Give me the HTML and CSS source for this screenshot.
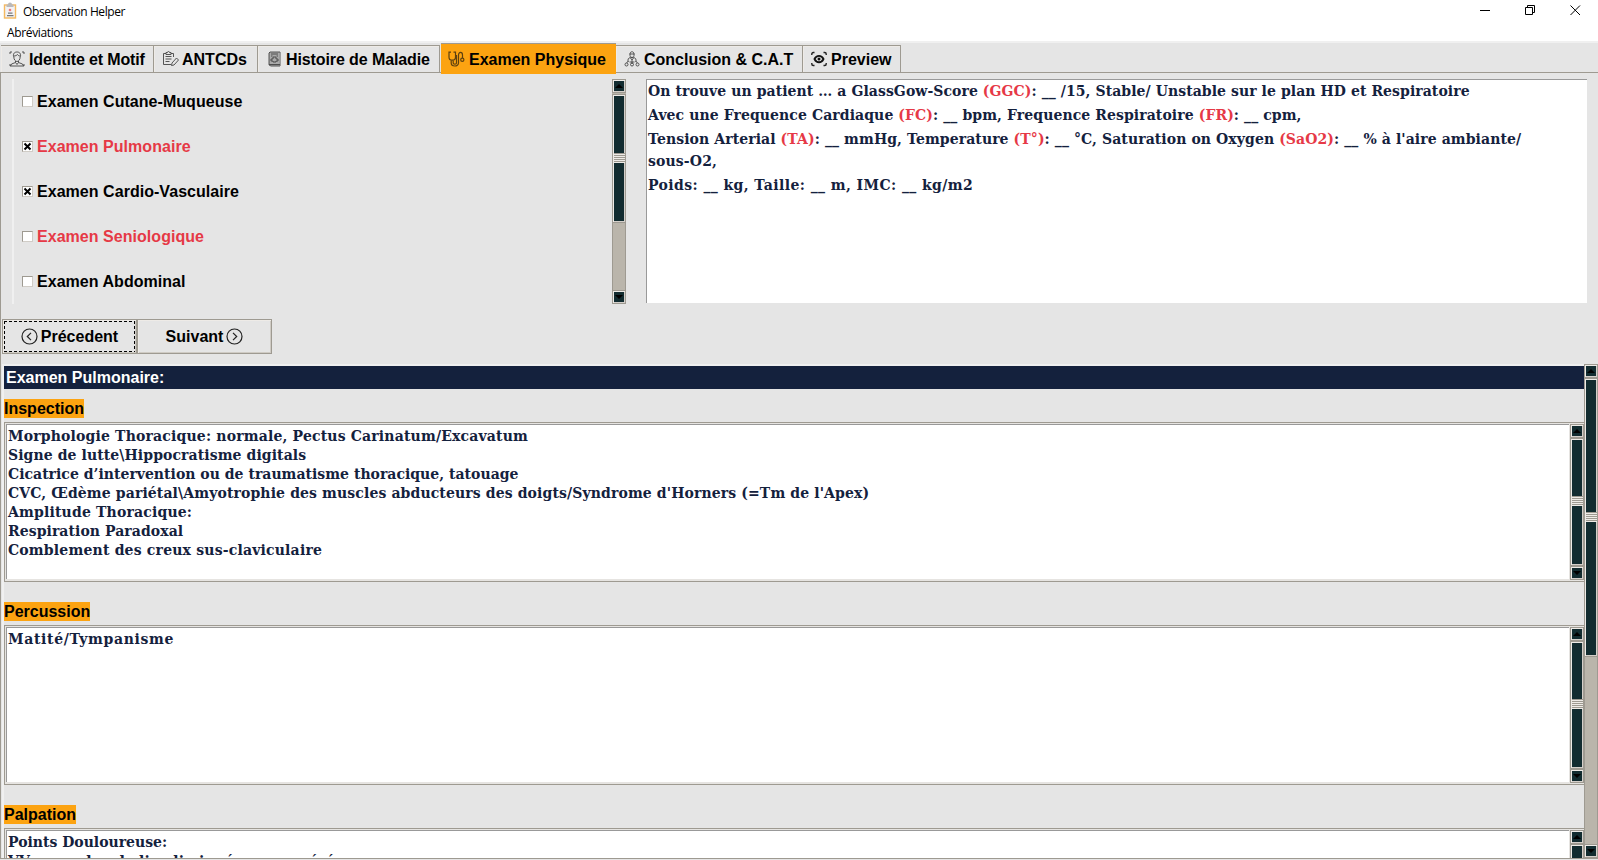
FILE: index.html
```html
<!DOCTYPE html>
<html lang="fr">
<head>
<meta charset="utf-8">
<title>Observation Helper</title>
<link rel="stylesheet" href="styles.css">
</head>
<body>
<header class="titlebar">
  <svg class="app-icon" width="14" height="18" viewBox="0 0 14 18"><rect x="1.500" y="3" width="11" height="13" fill="#f2f2f4" stroke="#f5b95f" stroke-width="1.400"/><path d="M3.500 5V2.500H5a2 2 0 0 1 4 0h1.500V5z" fill="#b9b9bb"/><circle cx="7" cy="8" r="1.300" fill="#f0777a"/><path d="M5 11.200h4.500M4 13.700h6.500" stroke="#777" stroke-width="1.200"/></svg>
  <span class="title">Observation Helper</span>
  <div class="controls">
    <svg width="11" height="11" viewBox="0 0 11 11"><path d="M0 5.500h10" stroke="#000"/></svg>
    <svg width="11" height="11" viewBox="0 0 11 11"><path d="M.5 2.500h7v7h-7zM2.500 2.500v-2h7v7h-2" fill="none" stroke="#000"/></svg>
    <svg width="11" height="11" viewBox="0 0 11 11"><path d="M.5.5l9.500 9.500M10 .5L.5 10" stroke="#000"/></svg>
  </div>
</header>
<nav class="menubar"><span>Abréviations</span></nav>
<div class="tabs">
  <div class="tab t1"><svg width="16" height="16" viewBox="0 0 16 16"><path d="M1 3V1h2M13 1h2v2M1 13v2h14v-2M4.500 5.500C4 2 6 1 8 1s4 1 3.500 4.500M4.500 5c2 0 3-.5 4-1.500.5 1 1.500 1.500 3 1.500M4.800 5.500c0 3 1.500 5 3.200 5s3.200-2 3.200-5M6.500 10v1.500L2.500 13 1.500 15M9.500 10v1.500l4 1.500 1 2M6.500 11.500L8 13.500l1.500-2"/></svg><span>Identite et Motif</span></div>
  <div class="tab t2"><svg width="17" height="16" viewBox="0 0 17 16"><path d="M4 2.500H1.500v11H9M9 2.500h2.500V6M4 3.500v-2h1.500a1 1 0 0 1 2 0H9v2zM3.500 5.500h6M3.500 8h6M3.500 10.500h4M9.500 14.500l.5-2.500 4.500-5 2 2-4.500 5z"/></svg><span>ANTCDs</span></div>
  <div class="tab t3"><svg width="13" height="16" viewBox="0 0 13 16"><path class="fill" d="M1 1h10v14H1z"/><path d="M1 13.500V2l1-1h10v14H2.500L1 13.500h11M3 3h7M3 5h1.500M8.500 5H10M5 6h3v2h2v2H8v1H5v-1H3V8h2z"/></svg><span>Histoire de Maladie</span></div>
  <div class="tab active"><svg width="17" height="16" viewBox="0 0 17 16"><path d="M3 1.200H1v5c0 2 1.200 3 3.200 3s3.300-1 3.300-3v-5h-2M3.200 9.200V12c0 4 7.300 4 7.300 0V4c0-3.500 4-3.500 4 0v3M5.200 9.200V12c0 1.500 3.300 1.500 3.300 0V4"/><circle cx="14.300" cy="8.800" r="1.600"/></svg><span>Examen Physique</span></div>
  <div class="tab t5"><svg width="16" height="16" viewBox="0 0 16 16"><path d="M5.500 3h5M6 3c0-3 4-3 4 0v1.500c0 2.500-4 2.500-4 0zM4 11V9c0-2 1.500-2.500 4-2.500s4 .5 4 2.500v2M6.500 7L8 9l1.500-2M8 9v4M5.500 11h5M2.500 12l2-2M13.500 12l-2-2"/><circle cx="2.500" cy="13.500" r="1.500"/><circle cx="8" cy="13.500" r="1.500"/><circle cx="13.500" cy="13.500" r="1.500"/></svg><span>Conclusion &amp; C.A.T</span></div>
  <div class="tab t6"><svg width="16" height="16" viewBox="0 0 16 16"><path class="corner" d="M.8 4V3q0-1.500 1.500-1.500h1.200M12.500 1.500h1.200q1.500 0 1.500 1.500v1M.8 12v1q0 1.500 1.500 1.500h1.200M12.500 14.500h1.200q1.500 0 1.500-1.500v-1"/><path class="strong" d="M3.500 8c2-4.300 7-4.300 9 0-2 4.300-7 4.300-9 0z"/><circle cx="8" cy="8" r="1.500" class="pupil"/></svg><span>Preview</span></div>
</div>
<main class="pane">
  <section class="top">
    <div class="checks">
      <div class="check"><i></i><span>Examen Cutane-Muqueuse</span></div>
      <div class="check red"><i><svg width="9" height="9" viewBox="0 0 9 9"><path d="M1.500 1.500l6 6M7.500 1.500l-6 6"/></svg></i><span>Examen Pulmonaire</span></div>
      <div class="check"><i><svg width="9" height="9" viewBox="0 0 9 9"><path d="M1.500 1.500l6 6M7.500 1.500l-6 6"/></svg></i><span>Examen Cardio-Vasculaire</span></div>
      <div class="check red"><i></i><span>Examen Seniologique</span></div>
      <div class="check"><i></i><span>Examen Abdominal</span></div>
    </div>
    <div class="scroll partial">
      <div class="arrow"><svg width="8" height="4" viewBox="0 0 8 4"><path d="M4 0l4 4H0z"/></svg></div>
      <div class="thumb"><div class="grip"></div></div>
      <div class="trough"></div>
      <div class="arrow"><svg width="8" height="4" viewBox="0 0 8 4"><path d="M4 4l4-4H0z"/></svg></div>
    </div>
    <div class="summary slab">
      <p><span class="s1">On trouve un patient … a GlassGow-Score <b>(GGC)</b>: __ /15, Stable/ Unstable sur le plan HD et Respiratoire</span></p>
      <p><span class="s2">Avec une Frequence Cardiaque <b>(FC)</b>: __ bpm, Frequence Respiratoire <b>(FR)</b>: __ cpm,</span></p>
      <p><span class="s3">Tension Arterial <b>(TA)</b>: __ mmHg, Temperature <b>(T°)</b>: __ °C, Saturation on Oxygen <b>(SaO2)</b>: __ % à l'aire ambiante/</span><br><span class="s4">sous-O2,</span></p>
      <p><span class="s5">Poids: __ kg, Taille: __ m, IMC: __ kg/m2</span></p>
    </div>
  </section>
  <div class="buttons">
    <button class="btn focus"><svg width="17" height="17" viewBox="0 0 17 17"><circle cx="8.500" cy="8.500" r="7.500"/><path d="M10 4.800L6.300 8.500l3.700 3.700"/></svg><span>Précedent</span></button>
    <button class="btn"><span>Suivant</span><svg width="17" height="17" viewBox="0 0 17 17"><circle cx="8.500" cy="8.500" r="7.500"/><path d="M7 4.800l3.700 3.700L7 12.200"/></svg></button>
  </div>
  <section class="exam">
    <div class="exam-body">
      <h2>Examen Pulmonaire:</h2>
      <div class="group">
        <h3>Inspection</h3>
        <div class="box">
          <div class="text slab"><span class="i1">Morphologie Thoracique: normale, Pectus Carinatum/Excavatum</span><span class="i2">Signe de lutte\Hippocratisme digitals</span><span class="i3">Cicatrice d’intervention ou de traumatisme thoracique, tatouage</span><span class="i4">CVC, Œdème pariétal\Amyotrophie des muscles abducteurs des doigts/Syndrome d'Horners (=Tm de l'Apex)</span><span class="i5">Amplitude Thoracique:</span><span class="i6">Respiration Paradoxal</span><span class="i7">Comblement des creux sus-claviculaire</span></div>
          <div class="scroll"><div class="arrow"><svg width="8" height="4" viewBox="0 0 8 4"><path d="M4 0l4 4H0z"/></svg></div><div class="thumb"><div class="grip"></div></div><div class="arrow"><svg width="8" height="4" viewBox="0 0 8 4"><path d="M4 4l4-4H0z"/></svg></div></div>
        </div>
      </div>
      <div class="group">
        <h3>Percussion</h3>
        <div class="box">
          <div class="text slab"><span class="p1">Matité/Tympanisme</span></div>
          <div class="scroll"><div class="arrow"><svg width="8" height="4" viewBox="0 0 8 4"><path d="M4 0l4 4H0z"/></svg></div><div class="thumb"><div class="grip"></div></div><div class="arrow"><svg width="8" height="4" viewBox="0 0 8 4"><path d="M4 4l4-4H0z"/></svg></div></div>
        </div>
      </div>
      <div class="group">
        <h3>Palpation</h3>
        <div class="box">
          <div class="text slab"><span class="l1">Points Douloureuse:</span><span class="l2">VV normale, abolie, diminuée ou exagérée</span></div>
          <div class="scroll"><div class="arrow"><svg width="8" height="4" viewBox="0 0 8 4"><path d="M4 0l4 4H0z"/></svg></div><div class="thumb"><div class="grip"></div></div><div class="arrow"><svg width="8" height="4" viewBox="0 0 8 4"><path d="M4 4l4-4H0z"/></svg></div></div>
        </div>
      </div>
    </div>
    <div class="scroll outer">
      <div class="arrow"><svg width="8" height="4" viewBox="0 0 8 4"><path d="M4 0l4 4H0z"/></svg></div>
      <div class="thumb"><div class="grip"></div></div>
      <div class="trough"></div>
      <div class="arrow"><svg width="8" height="4" viewBox="0 0 8 4"><path d="M4 4l4-4H0z"/></svg></div>
    </div>
  </section>
</main>
</body>
</html>
```
FILE: styles.css
```css
* { box-sizing: border-box; }
body { margin: 0; width: 1598px; height: 860px; overflow: hidden; display: flex; flex-direction: column; background: #e5e5e5; color: #000; font: bold 16px "Liberation Sans", Arial, sans-serif; }
svg { display: block; flex: none; }
p, h2, h3 { margin: 0; font-size: 16px; }

.titlebar { height: 23px; flex: none; display: flex; align-items: flex-start; background: #fff; padding: 2px 17px 0 3px; font: 12px/20px "Open Sans", sans-serif; }
.title { margin-left: 6px; letter-spacing: -.4px; }
.controls { display: flex; gap: 34px; margin-left: auto; padding-top: 3px; }
.menubar { height: 20px; flex: none; background: #fff; border-bottom: 2px solid #f0f0f0; padding-left: 7px; font: 12px/20px "Open Sans", sans-serif; letter-spacing: -.36px; }

.tabs { height: 29px; flex: none; display: flex; align-items: flex-end; padding-left: 1px; }
.tab { height: 27px; display: flex; align-items: center; border: solid #9e9a91; border-width: 1px 1px 0 0; box-shadow: inset 1px 1px #eeebe7; padding-left: 8px; gap: 4px; white-space: nowrap; }
.tab span { padding-top: 2px; }
.tab svg { fill: none; stroke: #444; stroke-width: .9; }
.tab .fill { fill: #aaa; stroke: none; }
.tab .strong { stroke: #111; stroke-width: 1.8; }
.tab .corner { stroke: #222; stroke-width: 1.4; }
.tab .pupil { fill: #111; stroke: none; }
.t1 { width: 153px; letter-spacing: -.15px; }
.t2 { width: 104px; gap: 3px; }
.t3 { width: 182px; padding-left: 10px; gap: 5px; letter-spacing: -.1px; }
.active { width: 175px; height: 31px; margin-bottom: -2px; background: #fca311; border-width: 1px 0 0; border-color: #9e9a91; box-shadow: none; margin-left: 1px; z-index: 1; padding-left: 7px; }
.active svg { stroke: #5e4110; stroke-width: 1.2; }
.t5 { width: 187px; }
.t6 { width: 98px; }

.pane { flex: 1; min-height: 0; border: solid #9e9a91; border-width: 1px 0 1px 1px; margin-bottom: 1px; display: flex; flex-direction: column; }
.top { height: 246px; flex: none; padding: 6px 10px 0 11px; display: flex; align-items: flex-start; }
.checks { width: 600px; height: 225px; border-left: 2px solid #f0f0f0; padding-left: 8px; }
.check { height: 45px; display: flex; align-items: center; gap: 4px; padding-bottom: 1px; letter-spacing: .04px; }
.check span { padding-top: 2px; }
.check i { width: 11px; height: 11px; background: #fff; border: 1px solid #9e9a91; border-right-color: #d0ccc6; border-bottom-color: #d0ccc6; }
.check svg { stroke: #000; stroke-width: 2; }
.red, b { color: #e63946; }

.scroll { width: 14px; flex: none; display: flex; flex-direction: column; background: #bab5ab; }
.arrow, .thumb { border: 1px solid #9e9a91; background: #122c30; box-shadow: inset 1px 1px #eeebe7, inset -1px -1px #d4cfca; display: flex; align-items: center; justify-content: center; }
.arrow { height: 14px; flex: none; }
.thumb { flex: 1; }
.trough { border: solid #9e9a91; border-width: 0 1px; flex: 1; }
.grip { width: 11px; height: 10px; margin-bottom: 2px; background: repeating-linear-gradient(#9e9a91 0 1px, #eeebe7 1px 2px); }
.partial { height: 225px; }
.partial .thumb { flex: none; height: 129px; margin-top: 1px; }
.outer .thumb { flex: none; height: 279px; }

.slab { font: bold 14px "DejaVu Serif", serif; color: #14213d; white-space: nowrap; }
.summary { margin-left: 20px; width: 941px; height: 224px; background: #fff; border: solid #999; border-width: 1px 0 0 1px; padding-left: 1px; line-height: 22px; }
.summary p { font-size: 14px; margin-bottom: 2px; }

.buttons { display: flex; padding-left: 1px; height: 45px; flex: none; }
.btn { width: 135px; height: 35px; padding: 0; display: flex; align-items: center; justify-content: center; gap: 3px; font: inherit; color: #000; background: #e5e5e5; border: 1px solid #9e9a91; box-shadow: inset 1px 1px #eeebe7, inset -1px -1px #cfcbc4; position: relative; }
.btn svg { fill: none; stroke: #222; stroke-width: 1.2; }
.focus::after { content: ""; position: absolute; inset: 1px; background: repeating-linear-gradient(90deg, #000 0 3px, transparent 3px 5px) top / 100% 1px no-repeat, repeating-linear-gradient(90deg, #000 0 3px, transparent 3px 5px) bottom / 100% 1px no-repeat, repeating-linear-gradient(#000 0 3px, transparent 3px 5px) left / 1px 100% no-repeat, repeating-linear-gradient(#000 0 3px, transparent 3px 5px) right / 1px 100% no-repeat; }

.exam { flex: 1; min-height: 0; display: flex; }
.exam-body { flex: 1; min-width: 0; overflow: hidden; border: solid #f0f0f0; border-width: 2px 0 0 2px; margin-left: 1px; }
h2 { height: 23px; line-height: 23px; background: #14213d; color: #fff; padding-left: 2px; }
.group { padding-top: 10px; height: 203px; }
h3 { width: max-content; height: 19px; line-height: 19px; background: #fca311; margin-bottom: 4px; }
.box { height: 160px; display: flex; border: solid #9e9a91; border-width: 1px 0 1px 1px; background: #e6e4e1; padding: 1px 0 1px 1px; }
.text { flex: 1; height: 155px; background: #fff; border: solid #999; border-width: 1px 0 0 1px; margin-right: 1px; padding: 2px 0 0 1px; line-height: 19px; display: flex; flex-direction: column; align-items: flex-start; }

.s1 { letter-spacing: .07px; }
.s2 { letter-spacing: .09px; }
.s3 { letter-spacing: .09px; }
.s4 { letter-spacing: .14px; }
.s5 { letter-spacing: .41px; }
.i1 { letter-spacing: .17px; }
.i2 { letter-spacing: .09px; }
.i3 { letter-spacing: .02px; }
.i4 { letter-spacing: .12px; }
.i5 { letter-spacing: .17px; }
.i6 { letter-spacing: .07px; }
.i7 { letter-spacing: .19px; }
.p1 { letter-spacing: .68px; }
.l2 { letter-spacing: .1px; }
```
